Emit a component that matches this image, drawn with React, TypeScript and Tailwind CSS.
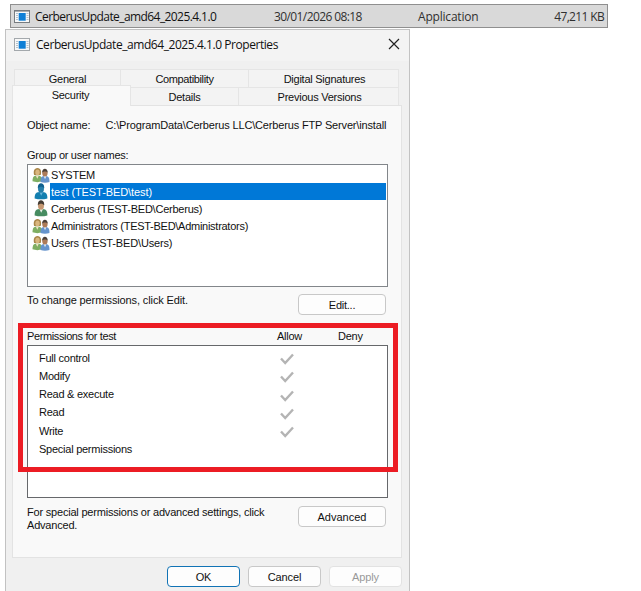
import React from 'react';

interface Principal {
  name: string;
  kind: 'group' | 'user';
  selected?: boolean;
  tracking: string;
}

const principals: Principal[] = [
  { name: 'SYSTEM', kind: 'group', tracking: 'tracking-[-0.2px]' },
  { name: 'test (TEST-BED\\test)', kind: 'user', selected: true, tracking: 'tracking-[-0.08px]' },
  { name: 'Cerberus (TEST-BED\\Cerberus)', kind: 'user', tracking: 'tracking-[-0.23px]' },
  { name: 'Administrators (TEST-BED\\Administrators)', kind: 'group', tracking: 'tracking-[-0.27px]' },
  { name: 'Users (TEST-BED\\Users)', kind: 'group', tracking: 'tracking-[-0.15px]' },
];

const permissions = [
  { name: 'Full control', allow: true },
  { name: 'Modify', allow: true },
  { name: 'Read & execute', allow: true },
  { name: 'Read', allow: true },
  { name: 'Write', allow: true },
  { name: 'Special permissions', allow: false },
];

const AppIcon = ({ faded = false }: { faded?: boolean }) => (
  <svg width="16" height="13" viewBox="0 0 16 13" className="shrink-0">
    <rect x="0.5" y="0.5" width="15" height="12" fill="#f8f8f8" stroke={faded ? '#a3a8ac' : '#777c80'} />
    {!faded && <path d="M0 1h16" stroke="#777c80" strokeWidth="1.2" />}
    <path d="M2 3.500h2M2 5.500h2M2 7.500h2M2 9.500h2M12.500 3.500h2M12.500 5.500h2M12.500 7.500h2M12.500 9.500h2" stroke="#b5c3ce" />
    <rect x="4.700" y="3" width="7" height="7.700" fill="#0f7fd6" />
  </svg>
);

const GroupIcon = () => (
  <svg width="18" height="16" viewBox="0 0 17 15" className="-ml-px shrink-0">
    <path d="M0.500 13.500c0-4 1-5.500 4.500-5.500s4.500 1.500 4.500 5.500q-4.500 1.500-9 0z" fill="#7fae62" />
    <path d="M3.500 8l1.500 3 1.500-3z" fill="#f1e2c5" />
    <path d="M2 7.500c-1-3 0-6.500 3.200-6.500s4 3.500 3 6.500z" fill="#a98547" />
    <ellipse cx="5.200" cy="5" rx="2.100" ry="2.800" fill="#d9b67e" />
    <path d="M8 14c0-4 .8-5.500 4.200-5.500s4.300 1.500 4.300 5.500q-4.200 1.500-8.500 0z" fill="#6694cc" />
    <path d="M11 8.500l1.300 3 1.300-3z" fill="#e9edf3" />
    <ellipse cx="12.200" cy="5.800" rx="2.500" ry="3.100" fill="#ad7b58" />
    <path d="M9.600 5.300c-.3-5 5.500-5 5.200 0-1-1.600-4-1.600-5.200 0z" fill="#4c4038" />
  </svg>
);

const UserIcon = ({ selected = false }: { selected?: boolean }) => (
  <svg width="18" height="17" viewBox="1 0 15 16" className="-ml-px shrink-0">
    <path d="M2.500 14.500c0-5 1.500-6 6-6s6 1 6 6q-6 1.800-12 0z" fill={selected ? '#147fb0' : '#478c61'} />
    <path d="M7 8.500l1.700 3.500 1.700-3.500z" fill={selected ? '#67b4da' : '#edf1ea'} />
    <ellipse cx="8.500" cy="5.300" rx="2.800" ry="3.800" fill={selected ? '#247eaa' : '#c59872'} />
    <path d="M5.500 5c-.5-6.500 6.700-6 6 0-1.300-2-4.500-2-6 0z" fill={selected ? '#0f608e' : '#443c34'} />
  </svg>
);

const Check = () => (
  <svg width="14" height="12" viewBox="0 0 14 12" className="mt-[2px]">
    <path d="M1 5.500l4.200 4.500L13 1.500" fill="none" stroke="#b4b4b4" strokeWidth="2.400" />
  </svg>
);

const button = 'flex h-[21px] shrink-0 items-center justify-center rounded-[4px] border bg-[#fdfdfd] pt-[2px]';

export default function App() {
  return (
    <div className="h-[591px] w-[641px] overflow-hidden bg-white pt-1 font-['Liberation_Sans',Arial,sans-serif] text-[11px] leading-[13px] tracking-[-0.25px] whitespace-pre text-[#111]">
      <div className="ml-[10px] flex h-[24px] w-[598px] items-center border border-[#8f8f8f] bg-[#d9d9d9] pl-[3px] font-['Open_Sans',sans-serif] text-[12px] text-[#303030]">
        <AppIcon />
        <span className="ml-[5px] w-[239px] tracking-[-0.58px] text-[#111]">CerberusUpdate_amd64_2025.4.1.0</span>
        <span className="w-[144px] tracking-[-0.6px]">30/01/2026 08:18</span>
        <span className="tracking-[-0.2px]">Application</span>
        <span className="mr-[3px] ml-auto tracking-[-0.65px]">47,211 KB</span>
      </div>

      <div className="mt-[1px] ml-[5px] h-[562px] w-[405px] border-x border-t border-[#c2c2c2] bg-[#f0f0f0]">
        <div className="flex h-[31px] items-center bg-[#f3f3f3] pb-[2px] pl-[8px] font-['Open_Sans',sans-serif] text-[12px]">
          <AppIcon faded />
          <span className="ml-[6px] tracking-[-0.44px]">CerberusUpdate_amd64_2025.4.1.0 Properties</span>
          <svg width="12" height="12" viewBox="0 0 12 12" className="mr-[9px] ml-auto -mt-px">
            <path d="M1 1l10 10M11 1L1 11" stroke="#222" strokeWidth="1.200" />
          </svg>
        </div>

        <div className="mt-[8px] ml-[8px] flex h-[18px] w-[385px] border-t border-l border-[#e5e5e5] bg-[#f3f3f3]">
          <div className="flex w-[106px] items-center justify-center border-r border-[#e5e5e5] pt-[2px]">General</div>
          <div className="flex w-[128px] items-center justify-center border-r border-[#e5e5e5] pt-[2px] tracking-[-0.38px]">Compatibility</div>
          <div className="flex flex-1 items-center justify-center border-r border-[#e5e5e5] pt-[2px] pl-[2px]">Digital Signatures</div>
        </div>
        <div className="ml-[6px] flex h-[18px] w-[387px] items-end">
          <div className="relative z-10 -mb-px flex h-[21px] w-[119px] items-center justify-center border border-b-0 border-[#e5e5e5] bg-[#f9f9f9] pr-[2px] pb-[2px]">Security</div>
          <div className="flex h-[18px] w-[108px] items-center justify-center border-t border-r border-[#e5e5e5] bg-[#f3f3f3] pt-[2px]">Details</div>
          <div className="flex h-[18px] flex-1 items-center justify-center border-t border-r border-[#e5e5e5] bg-[#f3f3f3] pt-[2px] pl-[2px]">Previous Versions</div>
        </div>

        <div className="relative ml-[6px] h-[453px] w-[390px] border border-[#e3e3e3] bg-[#f9f9f9] pl-[14px]">
          <div className="flex h-[39px] items-center">
            <span className="w-[78.5px] tracking-[-0.18px]">Object name:</span>
            <span className="tracking-[-0.16px]">C:\ProgramData\Cerberus LLC\Cerberus FTP Server\install</span>
          </div>
          <div className="mt-[4px] h-[15px] tracking-[-0.29px]">Group or user names:</div>
          <div className="h-[123px] w-[361px] border border-[#82868a] bg-white pt-[1px] pr-[1px] pl-[5px]">
            {principals.map((p) => (
              <div key={p.name} className="flex h-[17px] items-center">
                {p.kind === 'group' ? <GroupIcon /> : <UserIcon selected={p.selected} />}
                <span className={`flex h-full flex-1 items-center pt-[2px] pl-px ${p.tracking} ${p.selected ? 'bg-[#0078d7] text-white' : ''}`}>{p.name}</span>
              </div>
            ))}
          </div>
          <div className="mt-[7px] flex h-[21px] w-[359px] justify-between">
            <span className="tracking-[-0.12px]">To change permissions, click Edit.</span>
            <div className={`${button} w-[88px] border-[#c8c8c8]`}>Edit...</div>
          </div>

          <div className="mt-[14px] flex h-[16px] pt-px">
            <span className="w-[250px] tracking-[-0.38px]">Permissions for test</span>
            <span className="w-[61px]">Allow</span>
            <span>Deny</span>
          </div>
          <div className="h-[153px] w-[361px] border border-[#66686b] bg-white pt-[3px] pl-[11px]">
            {permissions.map((p) => (
              <div key={p.name} className="flex h-[18.250px] items-center">
                <span className="w-[241px]">{p.name}</span>
                {p.allow && <Check />}
              </div>
            ))}
          </div>
          <div className="mt-[8px] flex h-[26px] w-[359px] justify-between">
            <span className="tracking-[-0.2px]">{'For special permissions or advanced settings, click\nAdvanced.'}</span>
            <div className={`${button} w-[88px] border-[#c8c8c8] tracking-normal`}>Advanced</div>
          </div>
          {/* highlight around the permission list */}
          <div className="absolute top-[217px] left-[5px] h-[149px] w-[380px] border-[5px] border-[#ec1c24]" />
        </div>

        <div className="mt-[8px] flex justify-end gap-[8px] pr-[7px] tracking-[-0.15px]">
          <div className={`${button} w-[73px] border-[#1173b5]`}>OK</div>
          <div className={`${button} w-[73px] border-[#c8c8c8]`}>Cancel</div>
          <div className={`${button} w-[73px] border-[#e2e2e2] bg-[#f7f7f7] text-[#999]`}>Apply</div>
        </div>
      </div>
    </div>
  );
}
